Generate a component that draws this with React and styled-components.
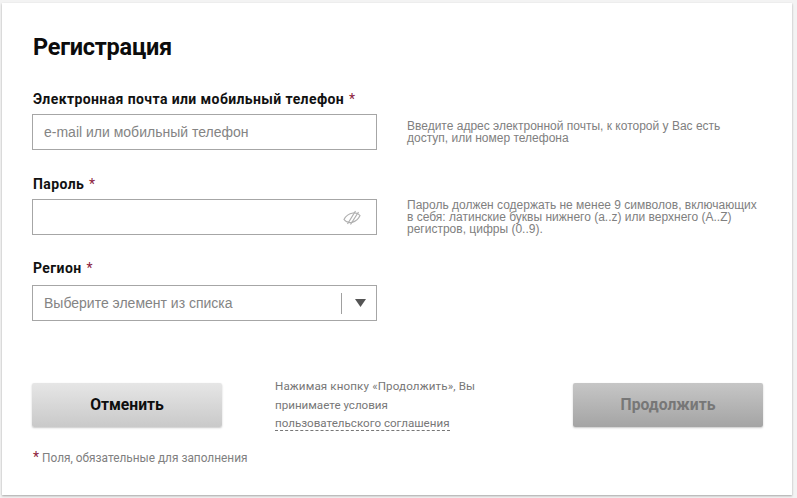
import React from "react";
import styled, { createGlobalStyle } from "styled-components";

const Global = createGlobalStyle`
  html, body { margin: 0; padding: 0; background: #f3f3f3; }
  body { font-family: "Liberation Sans", Arial, sans-serif; width: 797px; height: 498px; overflow: hidden; }
`;

const Card = styled.main`
  box-sizing: border-box;
  width: 790px;
  height: 492px;
  margin: 3px 0 0 2px;
  padding: 30px 26px 0 30px;
  background: #fff;
  box-shadow: 0 1px 2px rgba(0, 0, 0, 0.32);
`;

const Title = styled.h1`
  margin: 0 0 31px 1px;
  font: 700 23.5px/28px Roboto, sans-serif;
  color: #0c0c0c;
  letter-spacing: -0.25px;
`;

const Row = styled.section`
  display: grid;
  grid-template-columns: 345px 352px;
  column-gap: 30px;
  height: ${(p) => p.$height}px;
`;

const Field = styled.div`
  display: flex;
  flex-direction: column;
`;

const Label = styled.label`
  font: 700 14px/15px Roboto, sans-serif;
  letter-spacing: 0.4px;
  color: #111;
  height: ${(p) => p.$height}px;
  margin-left: 1px;
`;

const Star = styled.span`
  color: #8c1c3c;
  font-weight: 400;
  letter-spacing: 0;
  margin-left: 1px;
`;

const InputBox = styled.div`
  box-sizing: border-box;
  height: 36px;
  display: flex;
  align-items: center;
  padding: 0 10px 0 11px;
  border: 1px solid #a6a6a6;
  font-size: 14px;
  color: #848484;
`;

const Grow = styled.span`
  flex: 1;
`;

const Divider = styled.span`
  width: 1px;
  height: 21px;
  background: #a0a0a0;
  margin-right: 13px;
`;

const Hint = styled.p`
  margin: ${(p) => p.$top}px 0 0;
  font-size: 12px;
  line-height: 12px;
  color: #808080;
  width: 352px;
`;

const Actions = styled.div`
  display: flex;
  align-items: flex-start;
  margin-top: 36px;
`;

const Button = styled.button`
  box-sizing: border-box;
  flex: none;
  width: 190px;
  height: 44px;
  border: 0;
  border-radius: 2px;
  font: 700 15.7px/44px Roboto, sans-serif;
  padding: 0;
  color: ${(p) => (p.$primary ? "#777" : "#0e0e0e")};
  background: ${(p) =>
    p.$primary
      ? "linear-gradient(#c6c6c6, #a4a4a4)"
      : "linear-gradient(#e6e6e6, #c9c9c9)"};
  box-shadow: 0 1px 2px rgba(0, 0, 0, 0.22);
`;

const Terms = styled.p`
  flex: none;
  width: 298px;
  margin: -6px 0 0 53px;
  font: 400 11.6px/18.5px Roboto, sans-serif;
  color: #777;
`;

const TermsLead = styled.span`
  letter-spacing: 0.13px;
`;

const TermsLink = styled.span`
  border-bottom: 1px dashed #777;
`;

const Note = styled.p`
  margin: 16px 0 0 1px;
  font: 400 11.85px/16px Roboto, sans-serif;
  color: #808080;
`;

const NoteStar = styled.span`
  color: #8c1c3c;
  font-size: 14px;
  margin-right: 3px;
`;

const EyeIcon = styled.svg`
  margin-right: 5px;
`;

const EyeOff = () => (
  <EyeIcon width="18" height="15" viewBox="0 0 18 15" fill="none" stroke="#b0b0b0" strokeWidth="1.2">
    <path d="M1 9.5C3 5.5 6.5 3.5 10 3s5.5.6 7 2.5c-1.5 3.5-4.5 6-8 6.8S3 12 1 9.5z" />
    <path d="M4.5 14L12.5 1M7.5 14.5L15.5 2" />
  </EyeIcon>
);

const Caret = () => (
  <svg width="11" height="8" viewBox="0 0 11 8" fill="#555">
    <path d="M0 0h11L5.5 8z" />
  </svg>
);

export default function App() {
  return (
    <>
      <Global />
      <Card>
        <Title>Регистрация</Title>
        <Row $height={85}>
          <Field>
            <Label $height={22}>Электронная почта или мобильный телефон <Star>*</Star></Label>
            <InputBox>e-mail или мобильный телефон</InputBox>
          </Field>
          <Hint $top={28}>Введите адрес электронной почты, к которой у Вас есть<br />доступ, или номер телефона</Hint>
        </Row>
        <Row $height={84}>
          <Field>
            <Label $height={22}>Пароль <Star>*</Star></Label>
            <InputBox><Grow /><EyeOff /></InputBox>
          </Field>
          <Hint $top={22}>Пароль должен содержать не менее 9 символов, включающих<br />в себя: латинские буквы нижнего (a..z) или верхнего (A..Z)<br />регистров, цифры (0..9).</Hint>
        </Row>
        <Row $height={86}>
          <Field>
            <Label $height={24}>Регион <Star>*</Star></Label>
            <InputBox><Grow>Выберите элемент из списка</Grow><Divider /><Caret /></InputBox>
          </Field>
        </Row>
        <Actions>
          <Button>Отменить</Button>
          <Terms><TermsLead>Нажимая кнопку «Продолжить», Вы</TermsLead><br />принимаете условия<br /><TermsLink>пользовательского соглашения</TermsLink></Terms>
          <Button $primary>Продолжить</Button>
        </Actions>
        <Note><NoteStar>*</NoteStar>Поля, обязательные для заполнения</Note>
      </Card>
    </>
  );
}
